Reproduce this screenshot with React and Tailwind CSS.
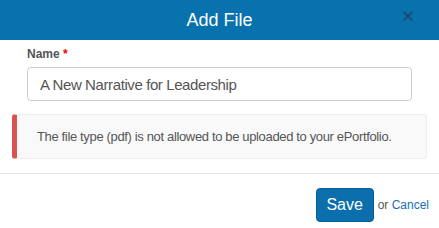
import React from "react";

const App = () => {
  return (
    <div className="w-[439px] h-[228px] bg-white overflow-hidden font-['Liberation_Sans',Arial,sans-serif]">
      {/* Header */}
      <div className="relative h-[40px] bg-[#0872ae] flex items-center justify-center">
        <h3 className="text-white text-[18px] leading-none">Add File</h3>
        <button className="absolute right-[25px] top-[6px] text-[#1c4f78] text-[20px] font-bold leading-none">
          ×
        </button>
      </div>

      {/* Body */}
      <div className="pt-[7px] px-[12px]">
        <div className="px-[15px]">
          <label className="block text-[12px] font-bold text-[#555] leading-[14px]">
            Name <span className="text-[#e00]">*</span>
          </label>
          <input
            readOnly
            value="A New Narrative for Leadership"
            className="mt-[6px] w-full h-[34px] px-[12px] border border-[#ccc] rounded-[4px] text-[15px] tracking-[-0.4px] text-[#555] outline-none font-['Liberation_Sans',Arial,sans-serif]"
          />
        </div>
        <div className="mt-[13px] h-[45px] flex items-center bg-[#f9f9f9] border border-[#eee] border-l-[5px] border-l-[#d9534f] rounded-[3px] pl-[20px]">
          <p className="text-[13px] tracking-[-0.35px] text-[#555]">
            The file type (pdf) is not allowed to be uploaded to your ePortfolio.
          </p>
        </div>
      </div>

      {/* Footer */}
      <div className="mt-[14px] border-t border-[#e5e5e5] flex items-center justify-end pt-[14px] pr-[10px]">
        <button className="w-[58px] h-[34px] bg-[#0a6fac] border border-[#08609a] rounded-[4px] text-white text-[16px]">
          Save
        </button>
        <span className="ml-[4px] text-[12px] text-[#555]">
          or <a className="text-[#1a6fb5]">Cancel</a>
        </span>
      </div>
    </div>
  );
};

export default App;
